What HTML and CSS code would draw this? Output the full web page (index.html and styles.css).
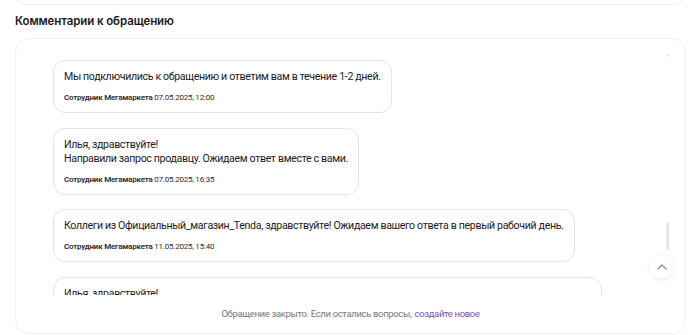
FILE: index.html
```html
<!DOCTYPE html>
<html lang="ru">
<head>
<meta charset="utf-8">
<link rel="stylesheet" href="styles.css">
</head>
<body>
<div class="top-card"></div>
<h2 class="section-title">Комментарии к обращению</h2>
<section class="comments">
  <div class="feed">
    <div class="bubble">
      <p class="msg">Мы подключились к обращению и ответим вам в течение 1-2 дней.</p>
      <p class="meta"><b>Сотрудник Мегамаркета</b> 07.05.2025, 12:00</p>
    </div>
    <div class="bubble">
      <p class="msg">Илья, здравствуйте!<br>Направили запрос продавцу. Ожидаем ответ вместе с вами.</p>
      <p class="meta"><b>Сотрудник Мегамаркета</b> 07.05.2025, 16:35</p>
    </div>
    <div class="bubble">
      <p class="msg">Коллеги из Официальный_магазин_Tenda, здравствуйте! Ожидаем вашего ответа в первый рабочий день.</p>
      <p class="meta"><b>Сотрудник Мегамаркета</b> 11.05.2025, 15:40</p>
    </div>
    <div class="bubble wide">
      <p class="msg">Илья, здравствуйте!</p>
    </div>
  </div>
  <span class="scroll-dot"></span>
  <span class="scroll-thumb"></span>
  <button class="to-top" type="button" aria-label="Наверх">
    <svg width="10" height="6" viewBox="0 0 10 6"><path d="M1 5l4-4 4 4" fill="none" stroke="#8a8a8a" stroke-width="1.2" stroke-linecap="round" stroke-linejoin="round"/></svg>
  </button>
  <p class="footer-note">Обращение закрыто. Если остались вопросы, <a href="#">создайте новое</a></p>
</section>
</body>
</html>
```
FILE: styles.css
```css
* { box-sizing: border-box; }
html, body { margin: 0; padding: 0; background: #fff; }
body {
  font-family: Roboto, "Noto Sans", sans-serif;
  color: #1b1b1f;
  width: 700px;
  height: 335px;
  overflow: hidden;
}
.top-card {
  height: 15px;
  margin: -10px 15px 0 15px;
  border: 1px solid #efeff1;
  border-top: none;
  border-radius: 0 0 12px 12px;
}
.section-title {
  margin: 9px 0 0 15px;
  font-family: Inter, "Noto Sans", sans-serif;
  font-size: 11.5px;
  line-height: 14px;
  font-weight: 600;
  letter-spacing: -0.1px;
}
.comments {
  position: relative;
  margin: 10px 14px 0 15px;
  height: 296px;
  border: 1px solid #efeff1;
  border-radius: 14px;
  display: flex;
  flex-direction: column;
}
.feed {
  height: 256px;
  overflow: hidden;
  padding: 21px 0 0 37px;
  display: flex;
  flex-direction: column;
  align-items: flex-start;
  gap: 14.5px;
}
.bubble {
  flex: none;
  border: 1px solid #e3e3e6;
  border-radius: 12px;
  padding: 9px 10px 8px 10px;
}
.bubble.wide { width: 549px; height: 60px; }
.msg {
  margin: 0;
  font-size: 10.6px;
  line-height: 14px;
  letter-spacing: -0.34px;
}
.meta {
  margin: 8px 0 0;
  font-size: 8px;
  line-height: 12px;
  letter-spacing: -0.22px;
  color: #2a2a2e;
}
.meta b { font-weight: 600; }
.scroll-dot {
  position: absolute;
  top: 15px;
  left: 650px;
  width: 3px;
  height: 3px;
  border-radius: 50%;
  background: #ececef;
}
.scroll-thumb {
  position: absolute;
  top: 183px;
  left: 650px;
  width: 3px;
  height: 28px;
  border-radius: 2px;
  background: #e7e7ec;
}
.to-top {
  position: absolute;
  top: 216px;
  left: 634px;
  width: 23px;
  height: 23px;
  border: none;
  border-radius: 50%;
  background: #fff;
  box-shadow: 0 1px 6px rgba(0,0,0,0.08);
  display: flex;
  align-items: center;
  justify-content: center;
  padding: 0;
}
.footer-note {
  margin: 0;
  flex: 1;
  display: flex;
  align-items: center;
  justify-content: center;
  padding-bottom: 2px;
  font-size: 9.5px;
  letter-spacing: -0.35px;
  color: #77777c;
}
.footer-note a {
  color: #7a4fb8;
  text-decoration: none;
  margin-left: 3px;
}
```
